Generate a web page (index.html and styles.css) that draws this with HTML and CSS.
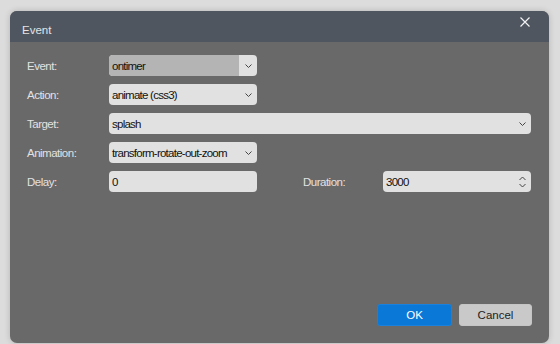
FILE: index.html
```html
<!DOCTYPE html>
<html>
<head>
<meta charset="utf-8">
<link rel="stylesheet" href="styles.css">
</head>
<body>
<div class="dialog">
  <div class="titlebar">
    <span class="title">Event</span>
    <span class="close">
      <svg width="10" height="10" viewBox="0 0 10 10"><path d="M0.5 0.5 L9.5 9.5 M9.5 0.5 L0.5 9.5" stroke="#f2f2f2" stroke-width="1.2" fill="none"/></svg>
    </span>
  </div>
  <div class="body">
    <div class="form">
      <label class="lbl">Event:</label>
      <div class="field select focused"><span class="val">ontimer</span><span class="arrow"><svg width="7" height="4" viewBox="0 0 7 4"><path d="M0.5 0.5 L3.5 3.5 L6.5 0.5" stroke="#444" stroke-width="1" fill="none"/></svg></span></div>
      <div class="spacer"></div>

      <label class="lbl">Action:</label>
      <div class="field select"><span class="val">animate (css3)</span><span class="arrow"><svg width="7" height="4" viewBox="0 0 7 4"><path d="M0.5 0.5 L3.5 3.5 L6.5 0.5" stroke="#444" stroke-width="1" fill="none"/></svg></span></div>
      <div class="spacer"></div>

      <label class="lbl">Target:</label>
      <div class="field select wide"><span class="val">splash</span><span class="arrow"><svg width="7" height="4" viewBox="0 0 7 4"><path d="M0.5 0.5 L3.5 3.5 L6.5 0.5" stroke="#444" stroke-width="1" fill="none"/></svg></span></div>

      <label class="lbl">Animation:</label>
      <div class="field select"><span class="val">transform-rotate-out-zoom</span><span class="arrow"><svg width="7" height="4" viewBox="0 0 7 4"><path d="M0.5 0.5 L3.5 3.5 L6.5 0.5" stroke="#444" stroke-width="1" fill="none"/></svg></span></div>
      <div class="spacer"></div>

      <label class="lbl">Delay:</label>
      <div class="field"><span class="val">0</span></div>
      <div class="spacer"></div>
      <label class="lbl">Duration:</label>
      <div class="field spin"><span class="val">3000</span><span class="arrow spinner"><svg width="7" height="12" viewBox="0 0 7 12"><path d="M0.5 4 L3.5 1 L6.5 4 M0.5 8 L3.5 11 L6.5 8" stroke="#444" stroke-width="1" fill="none"/></svg></span></div>
    </div>
    <div class="buttons">
      <button class="btn primary">OK</button>
      <button class="btn">Cancel</button>
    </div>
  </div>
</div>
</body>
</html>
```

FILE: styles.css
```css
html, body {
  margin: 0;
  padding: 0;
}
body {
  background: #dcdcdc;
  width: 560px;
  height: 344px;
  overflow: hidden;
  font-family: "Liberation Sans", Arial, sans-serif;
}
.dialog {
  margin: 11px 0 0 10px;
  width: 539px;
  height: 332px;
  border-radius: 7px;
  overflow: hidden;
  background: #696969;
  box-shadow: 0 0 6px rgba(0,0,0,0.18);
  display: flex;
  flex-direction: column;
}
.titlebar {
  height: 31px;
  background: #4f5660;
  display: flex;
  align-items: center;
  justify-content: space-between;
  padding: 0 19px 0 12px;
  flex: none;
}
.title {
  color: #e4e4e4;
  font-size: 11.5px;
  padding-top: 7px;
}
.close {
  display: flex;
  margin-top: -9px;
}
.body {
  flex: 1;
  display: flex;
  flex-direction: column;
  padding: 13px 17px 17px 17px;
}
.form {
  display: grid;
  grid-template-columns: 82px 148px 46px 80px 148px;
  grid-auto-rows: 21px;
  row-gap: 8px;
}
.lbl {
  color: #e2e2e2;
  font-size: 11.5px;
  letter-spacing: -0.5px;
  display: flex;
  align-items: center;
}
.spacer {
  grid-column: span 1;
}
.form .select:not(.wide) + .spacer {
  grid-column: span 3;
}
.field {
  background: #e1e1e1;
  border-radius: 4px;
  display: flex;
  align-items: center;
  font-size: 11.5px;
  letter-spacing: -0.75px;
  color: #111;
  overflow: hidden;
}
.field .val {
  flex: 1;
  padding-left: 3px;
  height: 100%;
  display: flex;
  align-items: center;
  white-space: nowrap;
}
.field.focused .val {
  background: #b4b4b4;
}
.field .arrow {
  width: 18px;
  display: flex;
  justify-content: center;
  align-items: center;
  height: 100%;
  flex: none;
}
.wide {
  grid-column: span 4;
}
.buttons {
  margin-top: auto;
  display: flex;
  justify-content: flex-end;
  gap: 7px;
}
.btn {
  font-family: "Liberation Sans", Arial, sans-serif;
  font-size: 11.5px;
  height: 22px;
  width: 73px;
  border: 1px solid #c5c5c5;
  border-radius: 3px;
  background: #c9c9c9;
  color: #222;
  padding: 0;
}
.btn.primary {
  width: 75px;
  background: #0a78d7;
  border-color: #1a82dc;
  color: #ffffff;
}
```
